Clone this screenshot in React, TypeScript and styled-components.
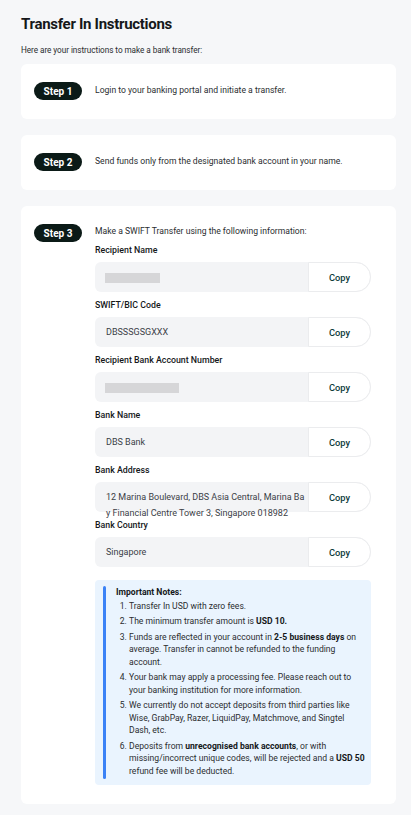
import styled, { createGlobalStyle } from "styled-components"

const Global = createGlobalStyle`
    body {
        margin: 0;
        background: #f6f7f9;
        font-family: Roboto, "Liberation Sans", sans-serif;
        color: #1a1d1f;
    }
`

const Page = styled.div`
    padding: 14px 15px 12px 21px;
`

const Title = styled.h1`
    margin: 0;
    font-size: 15px;
    line-height: 20px;
    font-weight: 700;
    letter-spacing: -0.3px;
    color: #15181a;
`

const Subtitle = styled.p`
    margin: 9px 0 0;
    font-size: 8.2px;
    line-height: 14px;
    letter-spacing: -0.05px;
    color: #2a2d30;
`

const Steps = styled.div`
    display: flex;
    flex-direction: column;
    gap: 16px;
    margin-top: 7px;
`

const Card = styled.div`
    display: flex;
    align-items: flex-start;
    gap: 13px;
    background: #fff;
    border-radius: 6px;
    padding: 18px 25px 19px 13px;
`

const Badge = styled.div`
    flex: none;
    width: 48px;
    height: 18px;
    border-radius: 9px;
    background: #0b1a17;
    color: #fff;
    font-size: 10px;
    font-weight: 700;
    display: flex;
    align-items: center;
    justify-content: center;
`

const Content = styled.div`
    flex: 1;
    display: flex;
    flex-direction: column;
`

const StepText = styled.div<{ $single?: boolean }>`
    font-size: 8.6px;
    line-height: 14px;
    color: #2a2d30;
    padding-top: ${p => (p.$single ? "1px" : "0")};
`

const Fields = styled.div`
    display: flex;
    flex-direction: column;
    gap: 6px;
    margin-top: 5px;
`

const Group = styled.div`
    display: flex;
    flex-direction: column;
    gap: 5px;
`

const Label = styled.div`
    font-size: 8.8px;
    line-height: 14px;
    font-weight: 500;
    color: #15181a;
`

const Field = styled.div`
    display: flex;
    height: 30px;
    background: #f3f4f6;
    border-radius: 6px 15px 15px 6px;
`

const Value = styled.div`
    flex: 1;
    min-width: 0;
    padding: 7px 2px 0 11px;
    font-size: 9px;
    line-height: 16px;
    color: #3b4046;
    word-break: break-all;
    position: relative;
    z-index: 1;
`

const Redacted = styled.span<{ $w: number }>`
    display: block;
    width: ${p => p.$w}px;
    height: 10px;
    margin: 4px 0 0 -1px;
    background: #d6d6d8;
`

const CopyButton = styled.button`
    flex: none;
    width: 63px;
    height: 30px;
    box-sizing: border-box;
    background: #fff;
    border: 1px solid #ebecee;
    border-radius: 0 15px 15px 0;
    font-family: inherit;
    font-size: 9.3px;
    font-weight: 500;
    color: #0c3b3b;
    cursor: pointer;
`

const Notes = styled.div`
    position: relative;
    margin-top: 13px;
    background: #eaf4fe;
    border-radius: 4px;
    padding: 6px 6px 8px 21px;
    font-size: 8.6px;
    line-height: 12.5px;
    color: #2a2d30;
    &::before {
        content: "";
        position: absolute;
        left: 8px;
        top: 6px;
        bottom: 6px;
        width: 3px;
        border-radius: 2px;
        background: #3b82f6;
    }
`

const NotesTitle = styled.div`
    font-weight: 700;
    color: #15181a;
`

const List = styled.ol`
    margin: 0;
    padding-left: 13px;
    & > li {
        margin-top: 3px;
    }
    & > li:first-child {
        margin-top: 1px;
    }
    b {
        font-weight: 700;
        color: #15181a;
        white-space: nowrap;
    }
`

const fields = [
    { label: "Recipient Name", redacted: 55 },
    { label: "SWIFT/BIC Code", value: "DBSSSGSGXXX" },
    { label: "Recipient Bank Account Number", redacted: 74 },
    { label: "Bank Name", value: "DBS Bank" },
    { label: "Bank Address", value: "12 Marina Boulevard, DBS Asia Central, Marina Bay Financial Centre Tower 3, Singapore 018982" },
    { label: "Bank Country", value: "Singapore" },
]

export default function App() {
    return (
        <Page>
            <Global />
            <Title>Transfer In Instructions</Title>
            <Subtitle>Here are your instructions to make a bank transfer:</Subtitle>
            <Steps>
                <Card>
                    <Badge>Step 1</Badge>
                    <StepText $single>Login to your banking portal and initiate a transfer.</StepText>
                </Card>
                <Card>
                    <Badge>Step 2</Badge>
                    <StepText $single>Send funds only from the designated bank account in your name.</StepText>
                </Card>
                <Card>
                    <Badge>Step 3</Badge>
                    <Content>
                        <StepText>Make a SWIFT Transfer using the following information:</StepText>
                        <Fields>
                            {fields.map(f => (
                                <Group key={f.label}>
                                    <Label>{f.label}</Label>
                                    <Field>
                                        <Value>{f.redacted ? <Redacted $w={f.redacted} /> : f.value}</Value>
                                        <CopyButton>Copy</CopyButton>
                                    </Field>
                                </Group>
                            ))}
                        </Fields>
                        <Notes>
                            <NotesTitle>Important Notes:</NotesTitle>
                            <List>
                                <li>Transfer In USD with zero fees.</li>
                                <li>The minimum transfer amount is <b>USD 10.</b></li>
                                <li>Funds are reflected in your account in <b>2-5 business days</b> on average. Transfer in cannot be refunded to the funding account.</li>
                                <li>Your bank may apply a processing fee. Please reach out to your banking institution for more information.</li>
                                <li>We currently do not accept deposits from third parties like Wise, GrabPay, Razer, LiquidPay, Matchmove, and Singtel Dash, etc.</li>
                                <li>Deposits from <b>unrecognised bank accounts</b>, or with missing/incorrect unique codes, will be rejected and a <b>USD 50</b> refund fee will be deducted.</li>
                            </List>
                        </Notes>
                    </Content>
                </Card>
            </Steps>
        </Page>
    )
}
